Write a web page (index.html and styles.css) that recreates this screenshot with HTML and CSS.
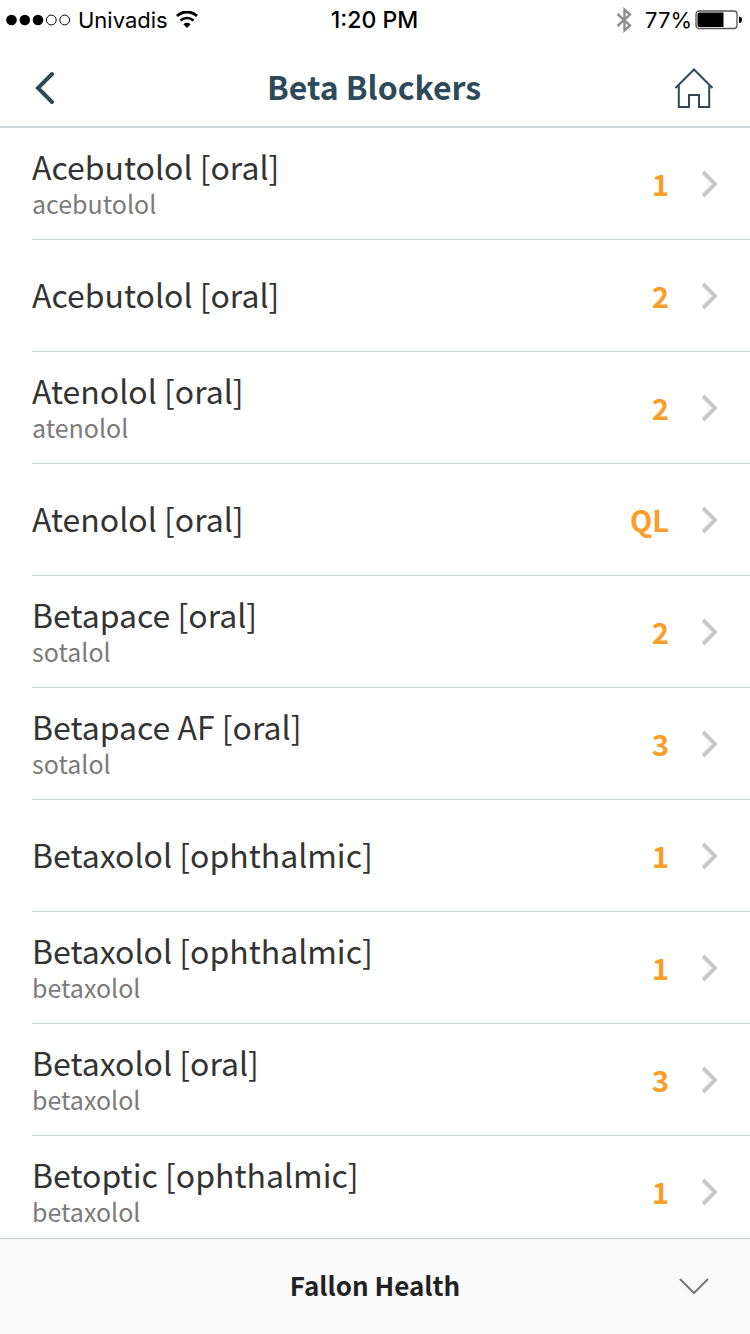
FILE: index.html
```html
<!DOCTYPE html>
<html lang="en">
<head>
  <meta charset="UTF-8">
  <meta name="viewport" content="width=device-width, initial-scale=1">
  <title>Beta Blockers</title>
  <link rel="stylesheet" href="styles.css">
</head>
<body>

  <svg width="0" height="0" class="sprite" aria-hidden="true">
    <symbol id="chevron" viewBox="0 0 18 28">
      <path d="M3 2 L15 14 L3 26" fill="none" stroke="currentColor" stroke-width="4"/>
    </symbol>
  </svg>

  <div class="status-bar">
    <div class="status-left">
      <svg class="signal" width="66" height="12" viewBox="0 0 66 12">
        <circle cx="5.500" cy="6" r="5.300"/>
        <circle cx="18.800" cy="6" r="5.300"/>
        <circle cx="32" cy="6" r="5.300"/>
        <circle cx="45.300" cy="6" r="4.900" class="empty"/>
        <circle cx="58.700" cy="6" r="4.900" class="empty"/>
      </svg>
      <span>Univadis</span>
      <svg class="wifi" width="22" height="18" viewBox="0 0 22 18">
        <path d="M1 5 A14.500 14.500 0 0 1 21 5" fill="none" stroke="#000" stroke-width="3"/>
        <path d="M4.500 9.500 A9.500 9.500 0 0 1 17.500 9.500" fill="none" stroke="#000" stroke-width="2.600"/>
        <path d="M11 17 L7.400 13.200 A5.200 5.200 0 0 1 14.600 13.200 Z"/>
      </svg>
    </div>
    <span class="time">1:20 PM</span>
    <div class="status-right">
      <svg class="bluetooth" width="16" height="26" viewBox="0 0 16 26">
        <path d="M1.500 7 L14 18.500 L8.500 23.500 V2.500 L14 7.500 L1.500 19" fill="none" stroke="#8e8e8e" stroke-width="2.400"/>
      </svg>
      <span>77%</span>
      <svg width="48" height="20" viewBox="0 0 48 20">
        <rect x="1" y="1" width="41" height="17.500" rx="3" fill="#fff" stroke="#555" stroke-width="1.300"/>
        <path d="M4 2.500 H28.500 V17 H4 Q2.500 17 2.500 15.500 V4 Q2.500 2.500 4 2.500 Z"/>
        <path d="M44 6.500 Q47 7 47 9.700 Q47 12.500 44 13 Z"/>
      </svg>
    </div>
  </div>

  <header class="nav-bar">
    <button class="icon-btn" aria-label="Back">
      <svg width="26" height="34" viewBox="0 0 26 34">
        <path d="M20 3 L6 17 L20 31" fill="none" stroke="currentColor" stroke-width="4" stroke-linecap="round"/>
      </svg>
    </button>
    <h1>Beta Blockers</h1>
    <button class="icon-btn" aria-label="Home">
      <svg width="40" height="42" viewBox="0 0 40 42">
        <path d="M1.500 21 L20 2.500 L38.500 21 M4.800 18.500 V40 H15 V28 H25 V40 H35.200 V18.500" fill="none" stroke="currentColor" stroke-width="2"/>
      </svg>
    </button>
  </header>

  <main class="drug-list">
    <a class="drug" href="#">
      <span class="names"><span class="brand">Acebutolol [oral]</span><span class="generic">acebutolol</span></span>
      <span class="tier">1</span>
      <svg class="chevron"><use href="#chevron"/></svg>
    </a>
    <a class="drug" href="#">
      <span class="names"><span class="brand">Acebutolol [oral]</span></span>
      <span class="tier">2</span>
      <svg class="chevron"><use href="#chevron"/></svg>
    </a>
    <a class="drug" href="#">
      <span class="names"><span class="brand">Atenolol [oral]</span><span class="generic">atenolol</span></span>
      <span class="tier">2</span>
      <svg class="chevron"><use href="#chevron"/></svg>
    </a>
    <a class="drug" href="#">
      <span class="names"><span class="brand">Atenolol [oral]</span></span>
      <span class="tier">QL</span>
      <svg class="chevron"><use href="#chevron"/></svg>
    </a>
    <a class="drug" href="#">
      <span class="names"><span class="brand">Betapace [oral]</span><span class="generic">sotalol</span></span>
      <span class="tier">2</span>
      <svg class="chevron"><use href="#chevron"/></svg>
    </a>
    <a class="drug" href="#">
      <span class="names"><span class="brand">Betapace AF [oral]</span><span class="generic">sotalol</span></span>
      <span class="tier">3</span>
      <svg class="chevron"><use href="#chevron"/></svg>
    </a>
    <a class="drug" href="#">
      <span class="names"><span class="brand">Betaxolol [ophthalmic]</span></span>
      <span class="tier">1</span>
      <svg class="chevron"><use href="#chevron"/></svg>
    </a>
    <a class="drug" href="#">
      <span class="names"><span class="brand">Betaxolol [ophthalmic]</span><span class="generic">betaxolol</span></span>
      <span class="tier">1</span>
      <svg class="chevron"><use href="#chevron"/></svg>
    </a>
    <a class="drug" href="#">
      <span class="names"><span class="brand">Betaxolol [oral]</span><span class="generic">betaxolol</span></span>
      <span class="tier">3</span>
      <svg class="chevron"><use href="#chevron"/></svg>
    </a>
    <a class="drug" href="#">
      <span class="names"><span class="brand">Betoptic [ophthalmic]</span><span class="generic">betaxolol</span></span>
      <span class="tier">1</span>
      <svg class="chevron"><use href="#chevron"/></svg>
    </a>
  </main>

  <button class="plan-bar">
    <span class="plan-name">Fallon Health</span>
    <svg width="30" height="18" viewBox="0 0 30 18">
      <path d="M1.500 1.500 L15 15 L28.500 1.500" fill="none" stroke="#777" stroke-width="2" stroke-linecap="round"/>
    </svg>
  </button>

</body>
</html>
```
FILE: styles.css
```css
:root {
  --navy: #2e4a5a;
  --text: #333333;
  --subtle: #7b7b7b;
  --line: #cdd6d8;
  --orange: #fb9d26;
}

* {
  box-sizing: border-box;
}

body {
  margin: 0;
  height: 100vh;
  display: flex;
  flex-direction: column;
  background: #fff;
  color: var(--text);
  font-family: "Noto Sans CJK SC", "Noto Sans", sans-serif;
}

svg {
  display: block;
  flex-shrink: 0;
}

.sprite {
  position: absolute;
}

button {
  border: 0;
  padding: 0;
  background: none;
  font-family: inherit;
  cursor: pointer;
}

/* status bar */
.status-bar {
  display: grid;
  grid-template-columns: 1fr auto 1fr;
  align-items: center;
  flex-shrink: 0;
  height: 40px;
  padding: 0 7px 0 6px;
  color: #000;
  font: 22px/40px Inter, sans-serif;
}

.status-left,
.status-right {
  display: flex;
  align-items: center;
}

.status-left {
  gap: 6px;
}

.status-right {
  justify-content: flex-end;
  gap: 3px;
}

.signal .empty {
  fill: none;
  stroke: #000;
  stroke-width: 1;
}

.wifi {
  margin-left: 2px;
}

.bluetooth {
  margin-right: 10px;
}

.time {
  font-size: 23px;
  font-weight: 500;
}

/* navigation */
.nav-bar {
  display: flex;
  align-items: center;
  justify-content: space-between;
  flex-shrink: 0;
  height: 88px;
  padding: 10px 34px 0 32px;
  border-bottom: 2px solid var(--line);
  color: var(--navy);
}

.nav-bar h1 {
  margin: 0;
  padding-bottom: 4px;
  font-size: 32px;
  line-height: 40px;
  font-weight: 700;
}

.icon-btn {
  display: flex;
  width: 44px;
  justify-content: center;
  color: inherit;
}

.icon-btn:first-child {
  justify-content: flex-start;
}

/* list */
.drug-list {
  flex: 1;
  min-height: 0;
  padding-left: 32px;
  overflow-y: auto;
  scrollbar-width: none;
}

.drug {
  display: flex;
  align-items: center;
  height: 112px;
  padding-right: 32px;
  border-bottom: 1px solid var(--line);
  color: inherit;
  text-decoration: none;
}

.names {
  flex: 1;
  display: flex;
  flex-direction: column;
  padding-bottom: 3px;
}

.brand {
  padding-bottom: 1px;
  font-size: 32px;
  line-height: 40px;
}

.generic {
  color: var(--subtle);
  font-size: 25px;
  line-height: 32px;
}

.tier {
  margin-right: 31px;
  padding-bottom: 2px;
  color: var(--orange);
  font-size: 29px;
  line-height: 40px;
  font-weight: 700;
}

.chevron {
  width: 18px;
  height: 28px;
  color: #c7c7cc;
}

/* selected plan */
.plan-bar {
  display: grid;
  grid-template-columns: 1fr auto 1fr;
  align-items: center;
  flex-shrink: 0;
  height: 96px;
  padding: 0 41px;
  border-top: 1px solid #c5ced3;
  background: #fafafa;
}

.plan-name {
  grid-column: 2;
  padding-bottom: 4px;
  color: #222;
  font-size: 26px;
  line-height: 32px;
  font-weight: 700;
}

.plan-bar svg {
  justify-self: end;
}
```
